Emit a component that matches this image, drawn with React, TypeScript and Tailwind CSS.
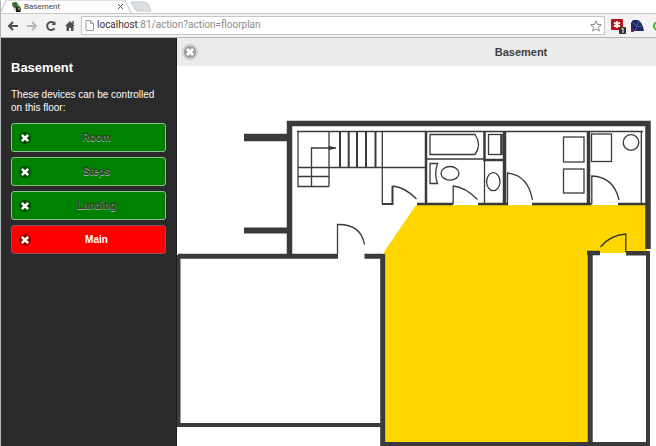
import type { ReactNode } from 'react';

type Device = { id: string; name: string; on: boolean };

const devices: Device[] = [
  { id: 'room', name: 'Room', on: false },
  { id: 'steps', name: 'Steps', on: false },
  { id: 'landing', name: 'Landing', on: false },
  { id: 'main', name: 'Main', on: true },
];

function ToolButton({ label, muted, children }: { label: string; muted?: boolean; children: ReactNode }) {
  return (
    <button type="button" aria-label={label} className={muted ? 'text-[#b8b8b8]' : 'text-[#505050]'}>
      <svg viewBox="0 0 12 12" className="size-3" fill="none" stroke="currentColor" strokeWidth="2">
        {children}
      </svg>
    </button>
  );
}

function TabStrip() {
  return (
    <div className="flex h-[13px] items-start bg-white">
      <div className="relative flex h-full w-[130px] items-center gap-[2px] pl-[11px]">
        <svg viewBox="0 0 130 13" className="absolute inset-0 h-full w-full" fill="#fdfdfd" stroke="#c4c4c4">
          <path d="M0 12 L5 0 H124 L130 13" />
        </svg>
        <svg viewBox="0 0 10 10" className="relative size-[10px]">
          <path d="M0 0h5l4 5v5H4L1 6z" fill="#b7c9b0" />
          <path d="M0 1l4-1 2 3-2 3-3-1z" fill="#2f6b2c" />
          <path d="M4 5l3-1 2 3-1 3H4z" fill="#1d1d1d" />
          <path d="M6 5l2 1v2H6z" fill="#6fa35f" />
        </svg>
        <span className="relative flex-1 font-[Roboto,sans-serif] text-[8px] leading-3 text-[#444]">Basement</span>
        <button type="button" aria-label="Close tab" className="relative mr-2">
          <svg viewBox="0 0 5 5" className="size-[5px]" stroke="#555" strokeWidth="1">
            <path d="M0 0l5 5M5 0L0 5" />
          </svg>
        </button>
      </div>
      <button type="button" aria-label="New tab">
        <svg viewBox="0 0 22 12" className="h-3 w-[22px]" fill="#dbe0e7" stroke="#c0c5cc">
          <path d="M0 2h13q3 0 4 2l3 7H7q-2 0-3-2z" />
        </svg>
      </button>
    </div>
  );
}

function Toolbar() {
  return (
    <div className="flex h-[25px] items-center overflow-hidden border-t border-b border-t-[#c8c8c8] border-b-[#b4b4b4] bg-[#f3f3f3] pl-[6px]">
      <div className="flex items-center gap-[7px]">
        <ToolButton label="Back">
          <path d="M11 6H2M6 2L2 6l4 4" />
        </ToolButton>
        <ToolButton label="Forward" muted>
          <path d="M1 6h9M6 2l4 4-4 4" />
        </ToolButton>
        <ToolButton label="Reload">
          <path d="M9.5 8.2A4 4 0 1 1 9 3.2" />
          <path d="M10.5 1v4h-4z" fill="currentColor" stroke="none" />
        </ToolButton>
        <ToolButton label="Home">
          <path d="M6 1l5 5H9.500v5H7V8H5v3H2.500V6H1z" fill="currentColor" stroke="none" />
          <path d="M9 1v3" strokeWidth="1.5" />
        </ToolButton>
      </div>
      <div className="ml-[5px] flex h-[19px] flex-1 items-center gap-[3px] border border-[#c6c6c6] bg-white pr-[2px] pl-[3px]">
        <svg viewBox="0 0 9 11" className="h-[11px] w-[9px]" fill="#fff" stroke="#999">
          <path d="M1 .5h4.5L8.500 3.500v7H1zM5.500 .5v3h3" />
        </svg>
        <div className="relative h-[17px] flex-1 font-[Roboto,sans-serif] text-[10px] leading-4">
          <input
            aria-label="Address"
            defaultValue="localhost:81/action?action=floorplan"
            className="absolute inset-0 w-full bg-transparent text-transparent caret-black outline-none"
          />
          <span aria-hidden="true" className="pointer-events-none text-[#8a8a8a]">
            <span className="text-[#333]">localhost</span>:81/action?action=floorplan
          </span>
        </div>
        <button type="button" aria-label="Bookmark this page">
          <svg viewBox="0 0 12 12" className="size-3" fill="#fff" stroke="#888">
            <path d="M6 .8l1.500 3.600 3.900.3-3 2.500 1 3.800L6 9l-3.400 2 1-3.800-3-2.500 3.900-.3z" />
          </svg>
        </button>
      </div>
      <div className="flex items-center pl-[6px]">
        <button type="button" aria-label="Extension, 1 notice">
          <svg viewBox="0 0 16 16" className="size-4">
            <rect x="0" y="1" width="12" height="11" rx="1" fill="#b5121b" />
            <path d="M6 3v7M3 4.500l6 4M9 4.500l-6 4" stroke="#fff" strokeWidth="1.600" />
            <rect x="8" y="9" width="7" height="7" rx="1" fill="#333" />
            <path d="M10.500 11l1.500-.8V15" stroke="#fff" fill="none" />
          </svg>
        </button>
        <button type="button" aria-label="Night sky extension" className="ml-1">
          <svg viewBox="0 0 13 12" className="h-3 w-[13px]">
            <path d="M0 11V3l2-3h5q5 3 6 11z" fill="#26265c" />
            <path d="M2 3l4 3M8 1l-2 5 5 1M4 11l2-5" stroke="#4a58a8" fill="none" />
            <path d="M0 9l3 1v2H0z" fill="#8c2448" />
          </svg>
        </button>
        <button type="button" aria-label="Sync extension" className="ml-[9px] w-[3px] overflow-hidden">
          <svg viewBox="0 0 10 10" className="size-[10px] max-w-none" fill="none" stroke="#4cb02c" strokeWidth="2">
            <circle cx="5" cy="5" r="4" />
          </svg>
        </button>
      </div>
    </div>
  );
}

function DeviceButton({ device }: { device: Device }) {
  return (
    <button
      type="button"
      aria-pressed={device.on}
      className={
        device.on
          ? 'flex h-[29px] items-center rounded-[3px] border border-[#8a5555] bg-[#f00] px-[7px] text-[10px] font-bold text-white'
          : 'flex h-[29px] items-center rounded-[3px] border border-[#8fc08f] bg-[#008000] px-[7px] text-[10px] font-bold text-[#2a402a] [text-shadow:0_1px_0_#a0b4a0]'
      }
    >
      <svg viewBox="0 0 12 12" className="size-3">
        <circle cx="6" cy="6" r="6" fill="#000" fillOpacity="0.4" />
        <path d="M2.800 2.800l6.400 6.400M9.200 2.800L2.800 9.200" stroke="#fff" strokeWidth="2.600" />
      </svg>
      <span className="flex-1 pl-1">{device.name}</span>
    </button>
  );
}

function DevicePanel() {
  return (
    <aside className="w-44 shrink-0 border-r border-[#1c1c1c] bg-[#2a2a2a] px-[10px] pt-[22px] text-white">
      <h2 className="text-[13px] leading-4 font-bold">Basement</h2>
      <p className="mt-3 text-[10px] leading-[13px]">These devices can be controlled on this floor:</p>
      <div className="mt-[9px] flex flex-col gap-[5px]">
        {devices.map((device) => (
          <DeviceButton key={device.id} device={device} />
        ))}
      </div>
    </aside>
  );
}

function FloorPlan() {
  return (
    <svg
      viewBox="177 66 479 380"
      className="block w-full"
      fill="none"
      stroke="#3a3a3a"
      strokeWidth="1.3"
      role="img"
      aria-label="Basement floor plan"
    >
      {/* Lit room */}
      <path d="M416 205H647V253H588V443H384V252Z" fill="#ffd700" stroke="none" />

      {/* Outer walls */}
      <g strokeWidth="5">
        <path d="M289.500 257V123.500H648V249" strokeWidth="5.5" />
        <path d="M244 137.500H288" strokeWidth="7.5" />
        <path d="M244 230.500H288" strokeWidth="6" />
        <path d="M178 256.300H338M364.500 256.300H383" />
        <path d="M178.500 255V427" strokeWidth="4" />
        <path d="M178 425H382" strokeWidth="4" />
        <path d="M382.700 254V446" />
        <path d="M381 444.500H650" />
        <path d="M587 253H600M626 253.300H650" strokeWidth="4.5" />
        <path d="M590.200 253V444" />
        <path d="M648 252V444" strokeWidth="4" />
      </g>

      {/* Staircase */}
      <path d="M297 131.500H643M641.300 131V204M298 131V186.500H329M329 131V186.500M298 167.500H426M298 176.500H329" />
      <path d="M311.500 186.500V148H334" />
      <path d="M329 146.500L336 148L329 149.500Z" fill="#3a3a3a" strokeWidth="1" />
      <path d="M340 131V167M348.700 131V167M357 131V167M366 131V167M375.500 131V167" strokeWidth="2" />
      <path d="M382.300 131V204" />

      {/* Inner walls */}
      <g strokeWidth="2.5">
        <path d="M382 204H392.500V186" strokeWidth="2" />
        <path d="M417 204H453M478 204H508M532 204H591.500M618 204H647" />
        <path d="M426 131V204M484.500 131V160H504" />
        <path d="M504.500 131V204M588.500 131V204" strokeWidth="3.5" />
      </g>
      <path d="M426 159H484M484.500 160V204" />

      {/* Doors */}
      <path d="M392.500 186Q405 187 416.500 199" />
      <path d="M453.200 204V186Q465 187 477.500 199.500" />
      <path d="M507.500 204V173Q528 175 532.500 200" />
      <path d="M591.800 204V176Q614 177 619 200" />
      <path d="M337.500 254V224.500Q361 224 364.500 244.500" />
      <path d="M625.800 252V234Q610 235 600.500 247" />

      {/* Bathroom */}
      <path d="M430 134.500H475Q482 145 475 154.500H430Z" />
      <path d="M430 163.500H437.500Q434 174 437.500 183.500H430Z" />
      <ellipse cx="450" cy="173.3" rx="9" ry="6.8" />
      <ellipse cx="493.3" cy="181.7" rx="6.7" ry="9" />
      <rect x="488.5" y="134.5" width="13" height="20" />
      <path d="M501.500 134V155" strokeWidth="2.5" />

      {/* Appliances */}
      <rect x="563.5" y="137" width="20.5" height="25" />
      <rect x="563.5" y="169" width="20.5" height="24" />
      <rect x="591.5" y="134" width="20" height="27.5" />
      <circle cx="631" cy="142.5" r="7.8" />
    </svg>
  );
}

export default function App() {
  return (
    <div className="flex h-screen flex-col overflow-hidden border-l border-[#b0b4b8] bg-white font-['Liberation_Sans',Arial,sans-serif]">
      <header className="shrink-0">
        <TabStrip />
        <Toolbar />
      </header>
      <div className="flex min-h-0 flex-1">
        <DevicePanel />
        <main className="min-w-0 flex-1">
          <div className="flex h-7 items-center bg-[#ebebeb] pl-[5px]">
            <button type="button" aria-label="Close panel">
              <svg viewBox="0 0 16 16" className="size-4">
                <circle cx="8" cy="8" r="7" fill="#a3a3a3" stroke="#fff" />
                <circle cx="8" cy="8" r="7.5" fill="none" stroke="#c4c4c4" />
                <path d="M5 5l6 6M11 5l-6 6" stroke="#fff" strokeWidth="2.6" />
              </svg>
            </button>
            <h1 className="flex-1 pl-[188px] text-center text-[11px] font-bold text-[#3e3e3e]">Basement</h1>
          </div>
          <FloorPlan />
        </main>
      </div>
    </div>
  );
}
